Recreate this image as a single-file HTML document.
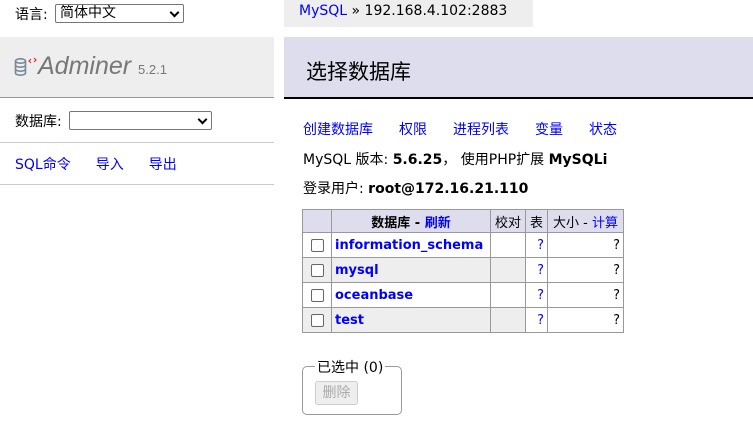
<!DOCTYPE html>
<html><head><meta charset="utf-8"><style>
*{margin:0;padding:0;box-sizing:border-box}
body{width:753px;height:438px;position:relative;background:#fff;font-family:"DejaVu Sans","Noto Sans CJK SC",sans-serif;font-size:14px;color:#000;overflow:hidden}
.a{position:absolute;white-space:nowrap}
a{color:#00f;text-decoration:none}
.sel{position:absolute;border:1px solid #767676;border-radius:2px;background:#fff;height:19px;font-size:14px;padding-left:4px;line-height:17px}
.sel:after{content:"";position:absolute;right:5px;top:4px;width:5px;height:5px;border-right:2px solid #000;border-bottom:2px solid #000;transform:rotate(45deg)}
table{border-collapse:collapse;position:absolute;left:302px;top:209px;table-layout:fixed;width:321px}
td,th{border:1px solid #999;height:25px;padding:0 3px;font-size:13px;white-space:nowrap;overflow:hidden}
th{background:#dde;font-weight:bold;height:23px;font-size:13px;padding:0 2px}
th.n{font-weight:normal}
tr.g td{background:#eee}
td b a{font-weight:bold}
.cb{width:13px;height:13px;border:1px solid #666;border-radius:2px;background:#fff;margin:auto}
</style></head><body>
<div class="a" style="left:15px;top:4px">语言:</div>
<div class="sel" style="left:55px;top:4px;width:129px">简体中文</div>
<div class="a" style="left:284px;top:0;width:249px;height:27px;background:#eee"></div>
<div class="a" style="left:299px;top:3px"><a>MySQL</a> » 192.168.4.102:2883</div>
<div class="a" style="left:0;top:37px;width:274px;height:61px;background:#eee;border-bottom:1px solid #999"></div>
<svg class="a" style="left:14px;top:57px" width="24" height="20" viewBox="0 0 24 20"><ellipse cx="6.5" cy="4" rx="5" ry="2.2" fill="none" stroke="#789" stroke-width="1.6"/><path d="M1.5 4v12c0 1.2 2.2 2.2 5 2.2s5-1 5-2.2V4M1.5 8c0 1.2 2.2 2.2 5 2.2s5-1 5-2.2M1.5 12c0 1.2 2.2 2.2 5 2.2s5-1 5-2.2" fill="none" stroke="#789" stroke-width="1.6"/><path d="M17 2l-2 2 2 2M20 1l2 2-2 2" fill="none" stroke="#d33" stroke-width="1.2"/></svg>
<div class="a" style="left:38px;top:52px;font-size:25px;font-style:italic;color:#777;font-family:'Liberation Sans',sans-serif">Adminer <span style="font-size:13px;font-style:normal">5.2.1</span></div>
<div class="a" style="left:15px;top:111px">数据库:</div>
<div class="sel" style="left:69px;top:111px;width:143px"></div>
<div class="a" style="left:0;top:142px;width:274px;border-top:1px solid #ccc"></div>
<div class="a" style="left:15px;top:154px"><a>SQL命令</a><a style="margin-left:25px">导入</a><a style="margin-left:25px">导出</a></div>
<div class="a" style="left:0;top:184px;width:274px;border-top:1px solid #ccc"></div>
<div class="a" style="left:284px;top:37px;width:469px;height:62px;background:#dde;border-bottom:2px solid #000"></div>
<div class="a" style="left:306px;top:56px;font-size:21px">选择数据库</div>
<div class="a" style="left:303px;top:119px"><a>创建数据库</a><a style="margin-left:26px">权限</a><a style="margin-left:26px">进程列表</a><a style="margin-left:26px">变量</a><a style="margin-left:26px">状态</a></div>
<div class="a" style="left:303px;top:149px">MySQL 版本: <b>5.6.25</b>， 使用PHP扩展 <b>MySQLi</b></div>
<div class="a" style="left:303px;top:178px">登录用户: <b>root@172.16.21.110</b></div>
<table>
<tr><th style="width:29px"></th><th style="width:159px">数据库 - <a>刷新</a></th><th class="n" style="width:35px">校对</th><th class="n" style="width:22px">表</th><th class="n" style="width:76px">大小 - <a>计算</a></th></tr>
<tr><td><div class="cb"></div></td><td><b><a>information_schema</a></b></td><td></td><td style="text-align:right"><a>?</a></td><td style="text-align:right">?</td></tr>
<tr class="g"><td><div class="cb"></div></td><td><b><a>mysql</a></b></td><td></td><td style="text-align:right;background:#fff"><a>?</a></td><td style="text-align:right;background:#fff">?</td></tr>
<tr><td><div class="cb"></div></td><td><b><a>oceanbase</a></b></td><td></td><td style="text-align:right"><a>?</a></td><td style="text-align:right">?</td></tr>
<tr class="g"><td><div class="cb"></div></td><td><b><a>test</a></b></td><td></td><td style="text-align:right;background:#fff"><a>?</a></td><td style="text-align:right;background:#fff">?</td></tr>
</table>
<div class="a" style="left:302px;top:366px;width:100px;height:49px;border:1px solid #999;border-radius:5px"></div>
<div class="a" style="left:315px;top:357px;background:#fff;padding:0 2px">已选中 (0)</div>
<div class="a" style="left:315px;top:381px;width:43px;height:24px;background:#eee;border:1px solid #ccc;border-radius:3px;color:#aaa;text-align:center;line-height:22px">删除</div>
</body></html>
